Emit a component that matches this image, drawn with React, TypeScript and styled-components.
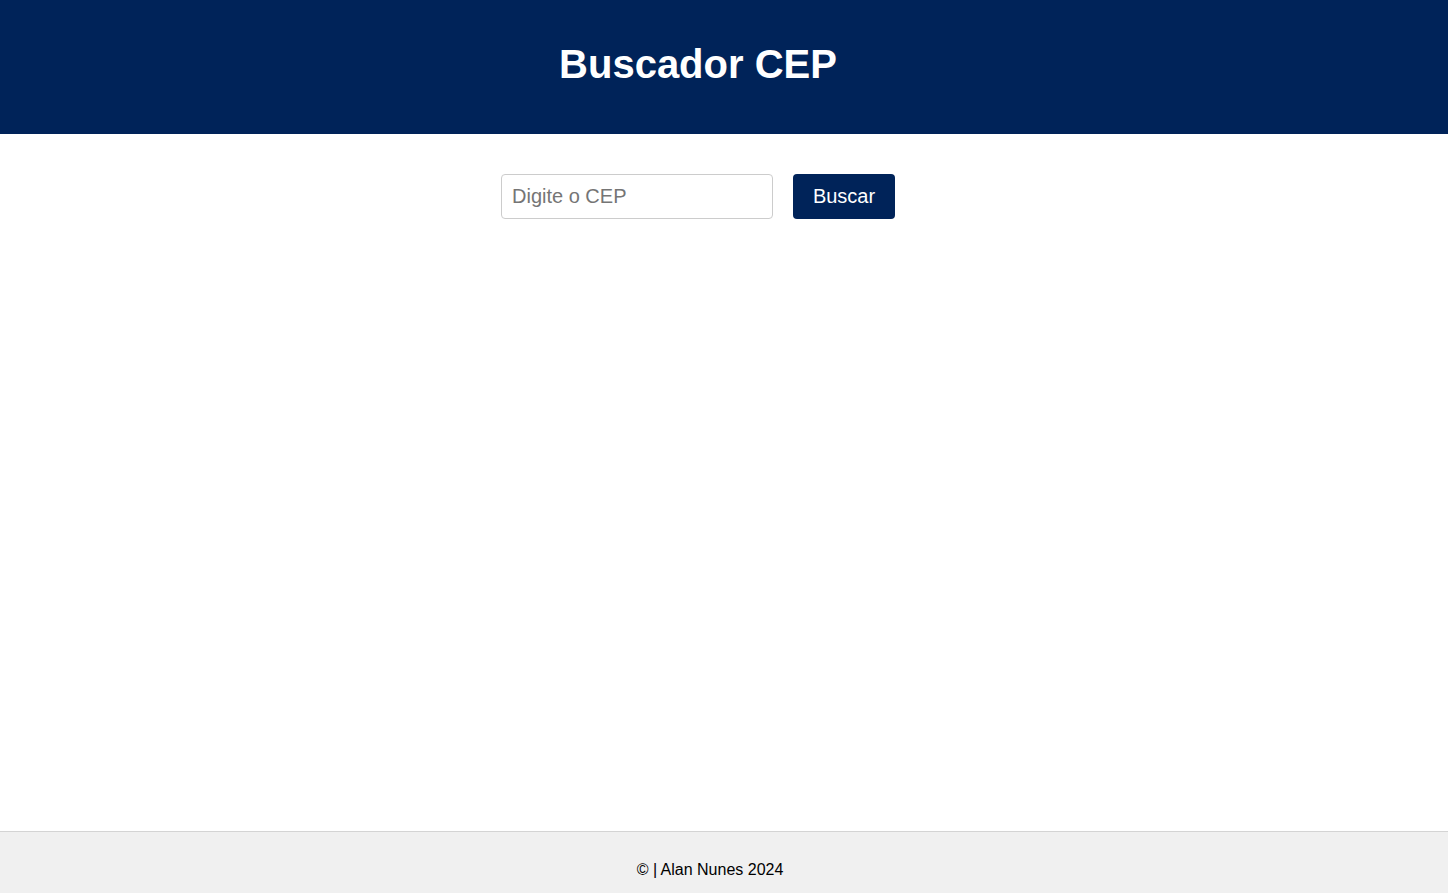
import React, { useState } from "react";
import styled, { createGlobalStyle } from "styled-components";

const navy = "#002359";

const GlobalStyle = createGlobalStyle`
	* {
		box-sizing: border-box;
	}
	body {
		margin: 0;
		font-family: "Liberation Sans", Arial, sans-serif;
		background: #ffffff;
	}
`;

const Page = styled.div`
	min-height: 100vh;
	display: flex;
	flex-direction: column;
`;

const Header = styled.header`
	background-color: ${navy};
	height: 134px;
	display: flex;
	align-items: center;
	justify-content: center;
	padding-right: 52px;
`;

const Title = styled.h1`
	margin: 0 0 6px;
	color: #ffffff;
	font-size: 40px;
	font-weight: 700;
`;

const Main = styled.main`
	flex: 1;
	display: flex;
	justify-content: center;
	align-items: flex-start;
	padding: 40px 52px 0 0;
`;

const SearchForm = styled.form`
	display: flex;
	gap: 20px;
`;

const CepInput = styled.input`
	width: 272px;
	height: 45px;
	padding: 0 10px;
	border: 1px solid #cccccc;
	border-radius: 4px;
	font-family: "Liberation Sans", Arial, sans-serif;
	font-size: 20px;
	color: #222222;
	outline: none;
	&::placeholder {
		color: #757575;
	}
`;

const SearchButton = styled.button`
	width: 102px;
	height: 45px;
	border: none;
	border-radius: 4px;
	background-color: ${navy};
	color: #ffffff;
	font-family: "Liberation Sans", Arial, sans-serif;
	font-size: 20px;
	cursor: pointer;
`;

const Footer = styled.footer`
	background-color: #f0f0f0;
	border-top: 1px solid #d4d4d4;
	padding: 29px 28px 14px 0;
	text-align: center;
	font-size: 16px;
	line-height: 18px;
	color: #000000;
`;

export default function App() {
	const [cep, setCep] = useState("");

	return (
		<>
			<GlobalStyle />
			<Page>
				<Header>
					<Title>Buscador CEP</Title>
				</Header>
				<Main>
					<SearchForm onSubmit={(e) => e.preventDefault()}>
						<CepInput
							type="text"
							placeholder="Digite o CEP"
							value={cep}
							onChange={(e) => setCep(e.target.value)}
						/>
						<SearchButton type="submit">Buscar</SearchButton>
					</SearchForm>
				</Main>
				<Footer>© | Alan Nunes 2024</Footer>
			</Page>
		</>
	);
}
